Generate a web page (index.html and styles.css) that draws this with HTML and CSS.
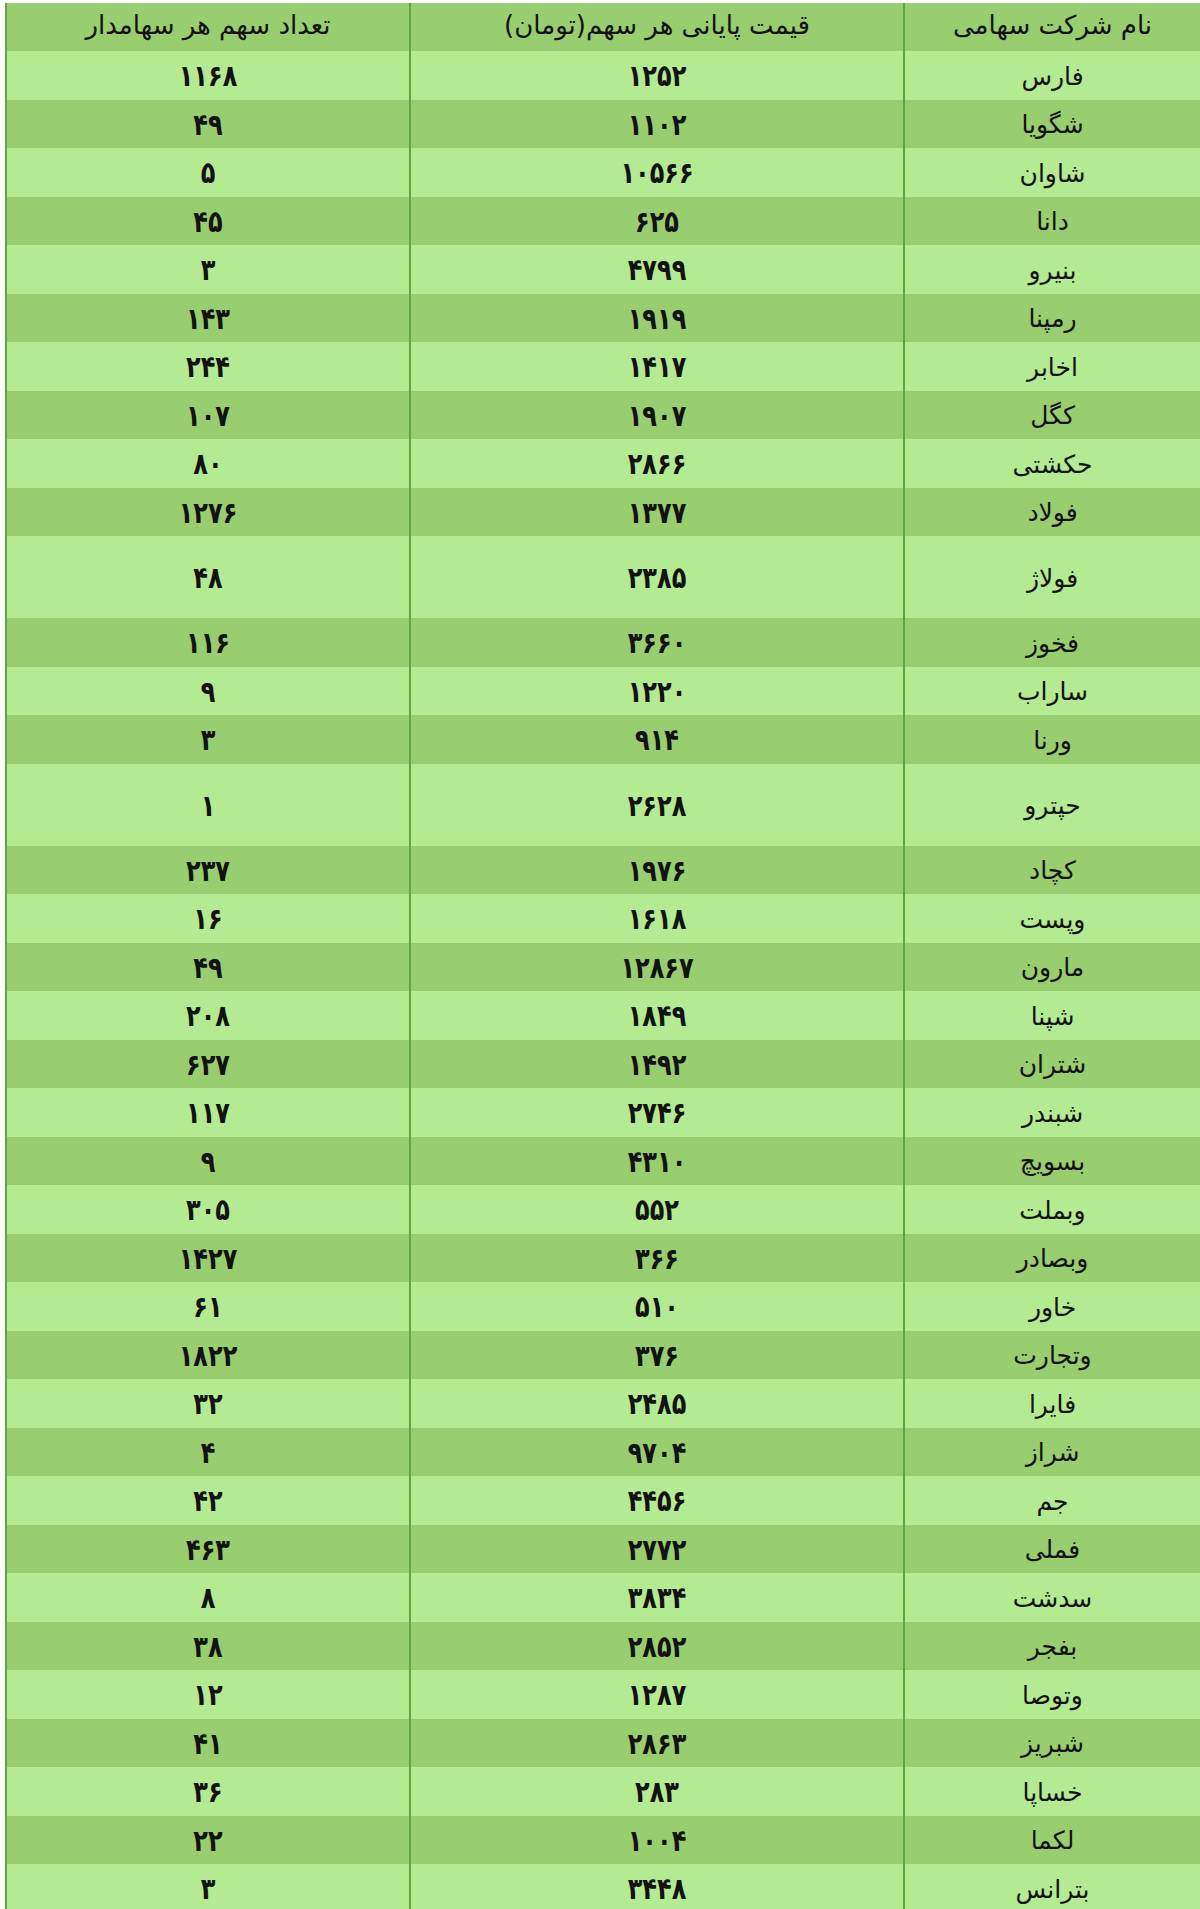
FILE: index.html
```html
<!DOCTYPE html>
<html lang="fa" dir="rtl">
<head>
<meta charset="utf-8">
<title>جدول سهام</title>
<link rel="stylesheet" href="styles.css">
</head>
<body>
<div class="table">
  <div class="row head"><div class="cell name">نام شرکت سهامی</div><div class="cell">قیمت پایانی هر سهم(تومان)</div><div class="cell">تعداد سهم هر سهامدار</div></div>
  <div class="row"><div class="cell name">فارس</div><div class="cell num"><span>۱۲۵۲</span></div><div class="cell num"><span>۱۱۶۸</span></div></div>
  <div class="row"><div class="cell name">شگویا</div><div class="cell num"><span>۱۱۰۲</span></div><div class="cell num"><span>۴۹</span></div></div>
  <div class="row"><div class="cell name">شاوان</div><div class="cell num"><span>۱۰۵۶۶</span></div><div class="cell num"><span>۵</span></div></div>
  <div class="row"><div class="cell name">دانا</div><div class="cell num"><span>۶۲۵</span></div><div class="cell num"><span>۴۵</span></div></div>
  <div class="row"><div class="cell name">بنیرو</div><div class="cell num"><span>۴۷۹۹</span></div><div class="cell num"><span>۳</span></div></div>
  <div class="row"><div class="cell name">رمپنا</div><div class="cell num"><span>۱۹۱۹</span></div><div class="cell num"><span>۱۴۳</span></div></div>
  <div class="row"><div class="cell name">اخابر</div><div class="cell num"><span>۱۴۱۷</span></div><div class="cell num"><span>۲۴۴</span></div></div>
  <div class="row"><div class="cell name">کگل</div><div class="cell num"><span>۱۹۰۷</span></div><div class="cell num"><span>۱۰۷</span></div></div>
  <div class="row"><div class="cell name">حکشتی</div><div class="cell num"><span>۲۸۶۶</span></div><div class="cell num"><span>۸۰</span></div></div>
  <div class="row"><div class="cell name">فولاد</div><div class="cell num"><span>۱۳۷۷</span></div><div class="cell num"><span>۱۲۷۶</span></div></div>
  <div class="row tall"><div class="cell name">فولاژ</div><div class="cell num"><span>۲۳۸۵</span></div><div class="cell num"><span>۴۸</span></div></div>
  <div class="row"><div class="cell name">فخوز</div><div class="cell num"><span>۳۶۶۰</span></div><div class="cell num"><span>۱۱۶</span></div></div>
  <div class="row"><div class="cell name">ساراب</div><div class="cell num"><span>۱۲۲۰</span></div><div class="cell num"><span>۹</span></div></div>
  <div class="row"><div class="cell name">ورنا</div><div class="cell num"><span>۹۱۴</span></div><div class="cell num"><span>۳</span></div></div>
  <div class="row tall"><div class="cell name">حپترو</div><div class="cell num"><span>۲۶۲۸</span></div><div class="cell num"><span>۱</span></div></div>
  <div class="row"><div class="cell name">کچاد</div><div class="cell num"><span>۱۹۷۶</span></div><div class="cell num"><span>۲۳۷</span></div></div>
  <div class="row"><div class="cell name">وپست</div><div class="cell num"><span>۱۶۱۸</span></div><div class="cell num"><span>۱۶</span></div></div>
  <div class="row"><div class="cell name">مارون</div><div class="cell num"><span>۱۲۸۶۷</span></div><div class="cell num"><span>۴۹</span></div></div>
  <div class="row"><div class="cell name">شپنا</div><div class="cell num"><span>۱۸۴۹</span></div><div class="cell num"><span>۲۰۸</span></div></div>
  <div class="row"><div class="cell name">شتران</div><div class="cell num"><span>۱۴۹۲</span></div><div class="cell num"><span>۶۲۷</span></div></div>
  <div class="row"><div class="cell name">شبندر</div><div class="cell num"><span>۲۷۴۶</span></div><div class="cell num"><span>۱۱۷</span></div></div>
  <div class="row"><div class="cell name">بسویچ</div><div class="cell num"><span>۴۳۱۰</span></div><div class="cell num"><span>۹</span></div></div>
  <div class="row"><div class="cell name">وبملت</div><div class="cell num"><span>۵۵۲</span></div><div class="cell num"><span>۳۰۵</span></div></div>
  <div class="row"><div class="cell name">وبصادر</div><div class="cell num"><span>۳۶۶</span></div><div class="cell num"><span>۱۴۲۷</span></div></div>
  <div class="row"><div class="cell name">خاور</div><div class="cell num"><span>۵۱۰</span></div><div class="cell num"><span>۶۱</span></div></div>
  <div class="row"><div class="cell name">وتجارت</div><div class="cell num"><span>۳۷۶</span></div><div class="cell num"><span>۱۸۲۲</span></div></div>
  <div class="row"><div class="cell name">فایرا</div><div class="cell num"><span>۲۴۸۵</span></div><div class="cell num"><span>۳۲</span></div></div>
  <div class="row"><div class="cell name">شراز</div><div class="cell num"><span>۹۷۰۴</span></div><div class="cell num"><span>۴</span></div></div>
  <div class="row"><div class="cell name">جم</div><div class="cell num"><span>۴۴۵۶</span></div><div class="cell num"><span>۴۲</span></div></div>
  <div class="row"><div class="cell name">فملی</div><div class="cell num"><span>۲۷۷۲</span></div><div class="cell num"><span>۴۶۳</span></div></div>
  <div class="row"><div class="cell name">سدشت</div><div class="cell num"><span>۳۸۳۴</span></div><div class="cell num"><span>۸</span></div></div>
  <div class="row"><div class="cell name">بفجر</div><div class="cell num"><span>۲۸۵۲</span></div><div class="cell num"><span>۳۸</span></div></div>
  <div class="row"><div class="cell name">وتوصا</div><div class="cell num"><span>۱۲۸۷</span></div><div class="cell num"><span>۱۲</span></div></div>
  <div class="row"><div class="cell name">شبریز</div><div class="cell num"><span>۲۸۶۳</span></div><div class="cell num"><span>۴۱</span></div></div>
  <div class="row"><div class="cell name">خساپا</div><div class="cell num"><span>۲۸۳</span></div><div class="cell num"><span>۳۶</span></div></div>
  <div class="row"><div class="cell name">لکما</div><div class="cell num"><span>۱۰۰۴</span></div><div class="cell num"><span>۲۲</span></div></div>
  <div class="row"><div class="cell name">بترانس</div><div class="cell num"><span>۳۴۴۸</span></div><div class="cell num"><span>۳</span></div></div>
</div>
</body>
</html>
```

FILE: styles.css
```css
html, body {
  margin: 0;
  padding: 0;
  background: #ffffff;
}
body {
  height: 1909px;
  overflow: hidden;
  font-family: "DejaVu Sans", sans-serif;
  color: #121212;
}
.table {
  margin: 3px 0 0 5px;
  width: 1195px;
  direction: rtl;
}
.row {
  display: grid;
  grid-template-columns: 297px 494px 1fr;
  height: 48.5px;
  background: #b3ea92;
}
.row:nth-child(odd) {
  background: #98cd70;
}
.row.head {
  height: 48px;
}
.row.tall {
  height: 82px;
}
.cell {
  display: flex;
  align-items: center;
  justify-content: center;
  border-left: 2px solid #5ea63d;
  font-size: 25px;
  padding-top: 2px;
  box-sizing: border-box;
}
.head .cell {
  font-size: 26px;
  padding-top: 0;
  padding-bottom: 4px;
}
.num {
  font-weight: bold;
  font-size: 24px;
}
.num span {
  display: inline-block;
  transform: scaleY(1.25);
}
```
